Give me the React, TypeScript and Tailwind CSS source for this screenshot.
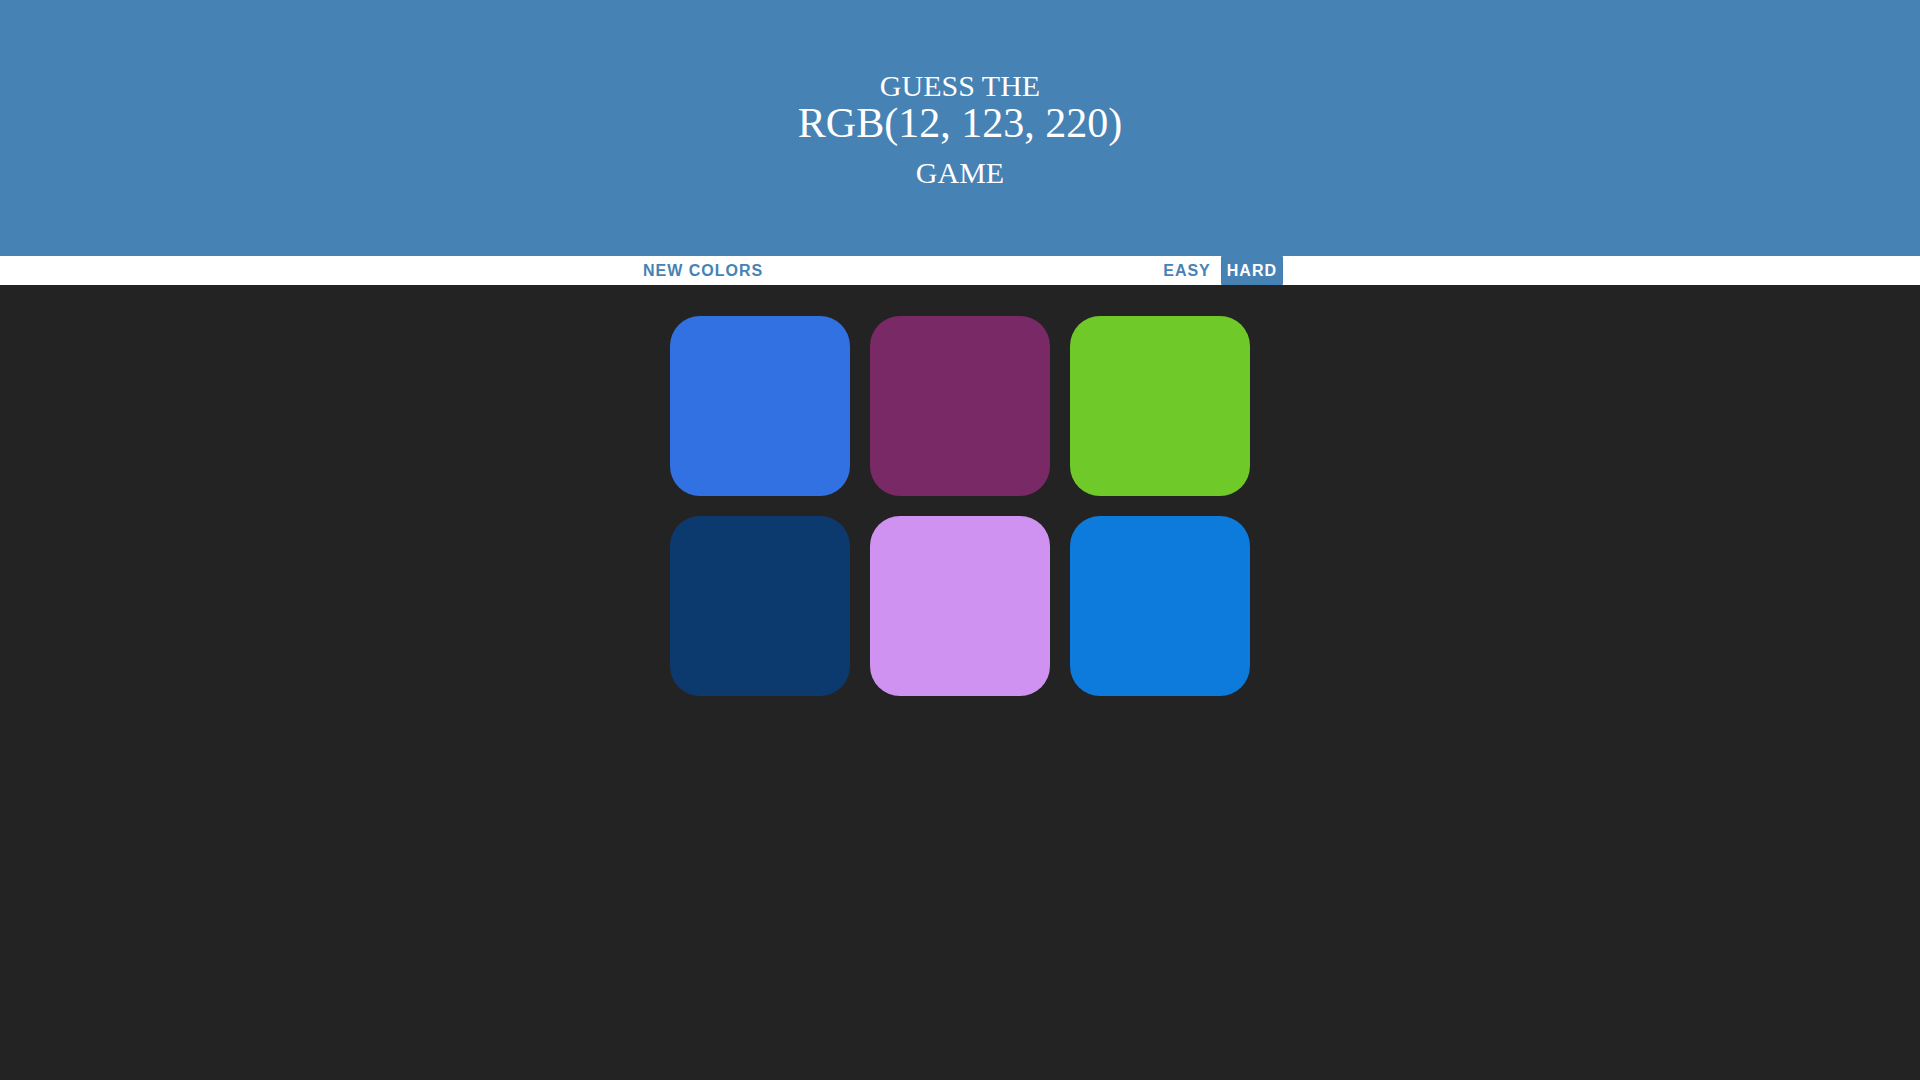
const COLORS = [
  "rgb(49, 113, 225)",
  "rgb(120, 41, 102)",
  "rgb(110, 201, 41)",
  "rgb(12, 57, 110)",
  "rgb(208, 146, 240)",
  "rgb(12, 123, 220)",
];

export default function App() {
  return (
    <div className="min-h-screen bg-[#232323]">
      {/* Title */}
      <h1 className="h-[256px] pt-[69px] bg-[#4682b4] text-white flex flex-col items-center font-['Liberation_Serif',serif] font-normal">
        <span className="text-[30px] leading-[34px]">GUESS THE</span>
        <span className="text-[42px] leading-[40px]">RGB(12, 123, 220)</span>
        <span className="text-[30px] leading-[40px] mt-[10px]">GAME</span>
      </h1>

      {/* Stripe */}
      <div className="h-[29px] bg-white flex justify-center">
        <div className="w-[646px] flex justify-between items-stretch font-['Liberation_Sans',sans-serif] font-bold text-[16px] tracking-[1px] text-[#4682b4]">
          <button className="px-[6px] uppercase">New Colors</button>
          <div className="flex gap-[4px]">
            <button className="px-[6px] uppercase">Easy</button>
            <button className="px-[6px] uppercase bg-[#4682b4] text-white rounded-[1px]">Hard</button>
          </div>
        </div>
      </div>

      {/* Squares */}
      <div className="mx-auto mt-[31px] w-[580px] grid grid-cols-3 gap-[20px]">
        {COLORS.map((c) => (
          <div key={c} className="h-[180px] rounded-[30px]" style={{ background: c }} />
        ))}
      </div>
    </div>
  );
}
